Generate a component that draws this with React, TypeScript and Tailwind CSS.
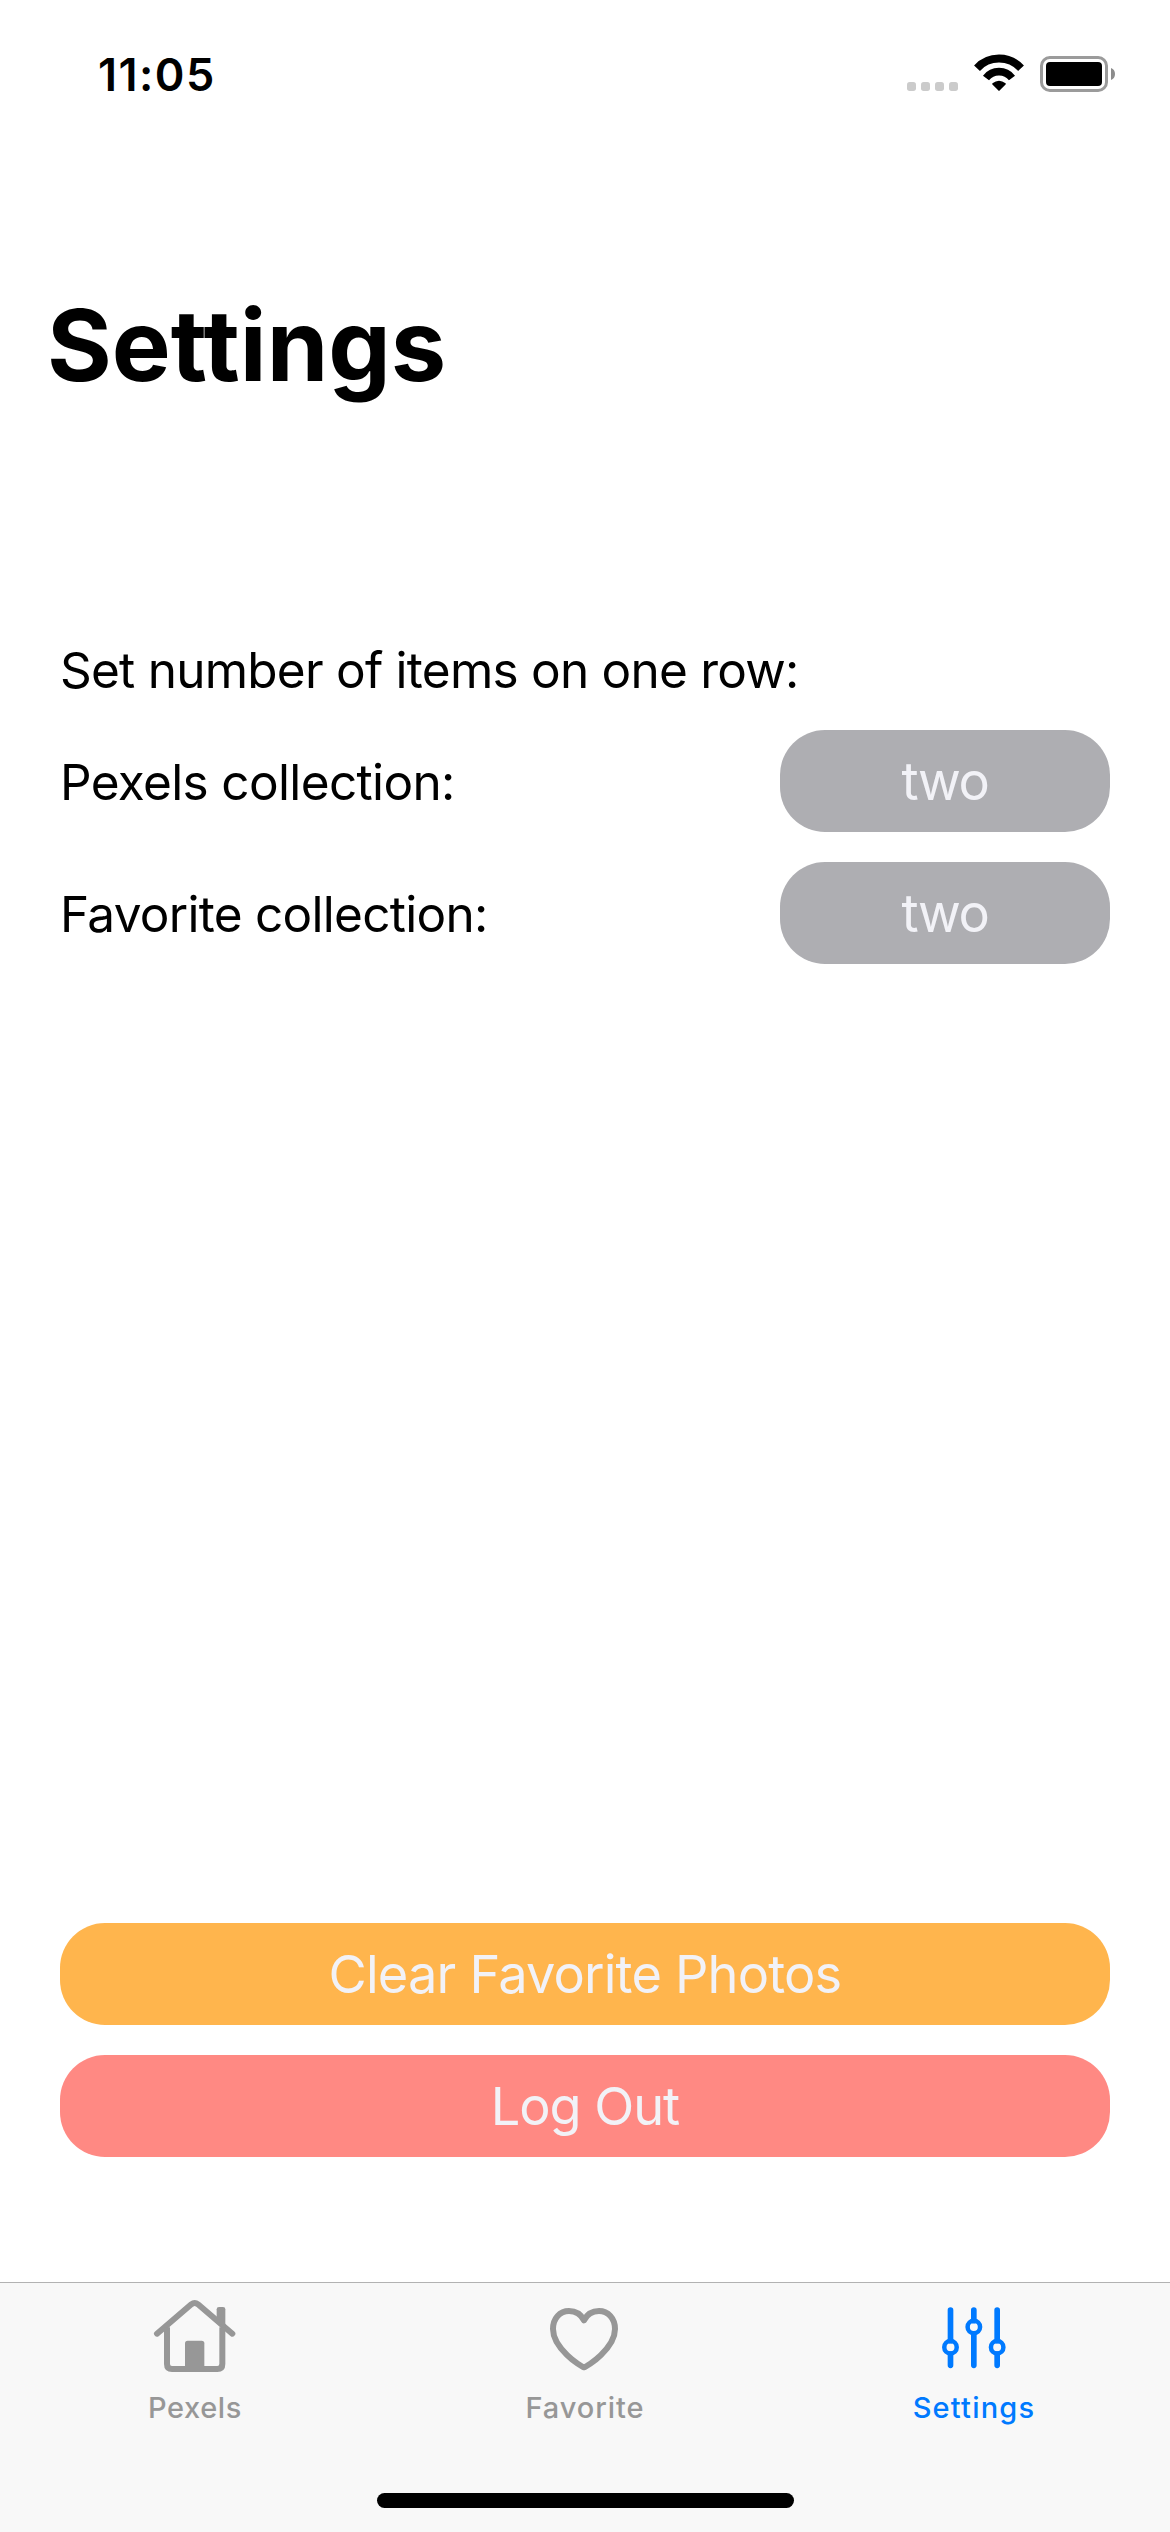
import type { ReactNode } from 'react'

function StatusBar() {
  return (
    <header className="flex h-[150px] items-center justify-between pl-[98px] pr-[30px]">
      <span className="text-[45px] leading-[150px] font-semibold tracking-[1.45px]">11:05</span>
      <svg className="h-[90px] w-[260px]" viewBox="0 0 780 270" fill="none">
        {[81, 123, 165, 207].map((x) => (
          <rect key={x} x={x} y="156" width="27" height="27" rx="8" fill="#cbcbcb" />
        ))}
        <path d="M291 114.5A90 90 0 0 1 423 114.5" stroke="#000" strokeWidth="24" />
        <path d="M318 144A49.5 49.5 0 0 1 396 144" stroke="#000" strokeWidth="23" />
        <path d="M339 162Q357 147 375 162L357 180Z" fill="#000" stroke="#000" strokeWidth="5" strokeLinejoin="round" />
        <rect x="484.500" y="82.500" width="195" height="99" rx="25" stroke="#9b9b9b" strokeWidth="9" />
        <rect x="498" y="96" width="168" height="72" rx="12" fill="#000" />
        <path d="M693 114Q705 119 705 132T693 150Z" fill="#8c8c8c" />
      </svg>
    </header>
  )
}

function SettingRow({ label }: { label: ReactNode }) {
  return (
    <div className="flex h-[102px] items-center justify-between">
      {label}
      <button className="h-[102px] w-[330px] rounded-[45px] bg-[#aeaeb2] text-[52.3px] leading-[102px] tracking-[-1.4px] text-[#f2f2f7]">
        two
      </button>
    </div>
  )
}

function HouseIcon() {
  return (
    <svg className="h-[100px] w-[130px]" viewBox="0 60 390 300" fill="none" stroke="currentColor" strokeLinecap="round" strokeLinejoin="round">
      <path d="M81 191L184 103Q194 95 204 103L307 191" strokeWidth="18" />
      <path d="M111 172V282Q111 297 126 297H262Q277 297 277 282V172" strokeWidth="18" strokeLinecap="butt" />
      <path d="M260 152V118Q260 111 267 111H279Q286 111 286 118V174Z" fill="currentColor" stroke="none" />
      <path d="M165 296V220Q165 212 173 212H215Q223 212 223 220V296Z" fill="currentColor" stroke="none" />
    </svg>
  )
}

function HeartIcon() {
  return (
    <svg className="h-[100px] w-[150px]" viewBox="0 60 450 300" fill="none" stroke="currentColor" strokeWidth="18">
      <path d="M222 292C211 289 129 235 129 177C129 145 150 123 177 123C197 123 213 133 222 151C231 133 247 123 267 123C294 123 315 145 315 177C315 235 233 289 222 292Z" strokeLinejoin="round" />
    </svg>
  )
}

function SlidersIcon() {
  return (
    <svg className="h-[100px] w-[150px]" viewBox="0 60 450 300" fill="none" stroke="currentColor" strokeWidth="17" strokeLinecap="round">
      <path d="M151.500 120V212M151.500 252V286M221.500 120V152M221.500 192V286M291.500 120V212M291.500 252V286" />
      <g strokeWidth="13.500">
        <circle cx="151.500" cy="232" r="18.700" />
        <circle cx="221.500" cy="171" r="18.700" />
        <circle cx="291.500" cy="232" r="18.700" />
      </g>
    </svg>
  )
}

export default function App() {
  return (
    <div className="flex h-[2532px] w-[1170px] flex-col bg-white font-[Inter,sans-serif] text-black">
      <StatusBar />
      <h1 className="h-[390px] pl-[47px] text-[99px] leading-[390px] font-bold">Settings</h1>

      <main className="flex flex-1 flex-col px-[60px] pt-[100px]">
        <p className="mb-[30px] h-[60px] text-[49.5px] leading-[60px] tracking-[-0.76px]">
          Set number of items on one row:
        </p>
        <div className="flex flex-col gap-[30px]">
          <SettingRow label={<span className="pt-[2px] text-[49.5px] leading-[60px] tracking-[-0.65px]">Pexels collection:</span>} />
          <SettingRow label={<span className="pt-[2px] text-[49.5px] leading-[60px] tracking-[-0.72px]">Favorite collection:</span>} />
        </div>
        <div className="mt-auto mb-[125px] flex flex-col gap-[30px]">
          <button className="h-[102px] rounded-[45px] bg-[#ffb54d] text-[52.3px] leading-[102px] tracking-[-0.81px] text-[#f2f2f7]">
            Clear Favorite Photos
          </button>
          <button className="h-[102px] rounded-[45px] bg-[#ff8983] text-[52.3px] leading-[102px] tracking-[-1.05px] text-[#f2f2f7]">
            Log Out
          </button>
        </div>
      </main>

      <nav className="flex h-[250px] flex-col items-center border-t border-[#b2b2b2] bg-[#f8f8f8] pt-[7px] text-[29px] leading-[36px] font-medium">
        <div className="grid w-full grid-cols-3 text-[#979797]">
          <div className="flex flex-col items-center">
            <HouseIcon />
            <span className="tracking-[0.62px]">Pexels</span>
          </div>
          <div className="flex flex-col items-center">
            <HeartIcon />
            <span className="tracking-[0.93px]">Favorite</span>
          </div>
          <div className="flex flex-col items-center text-[#007aff]">
            <SlidersIcon />
            <span className="pr-[2px] tracking-[1.2px]">Settings</span>
          </div>
        </div>
        <div className="mt-[67px] h-[15px] w-[417px] rounded-full bg-black" />
      </nav>
    </div>
  )
}
